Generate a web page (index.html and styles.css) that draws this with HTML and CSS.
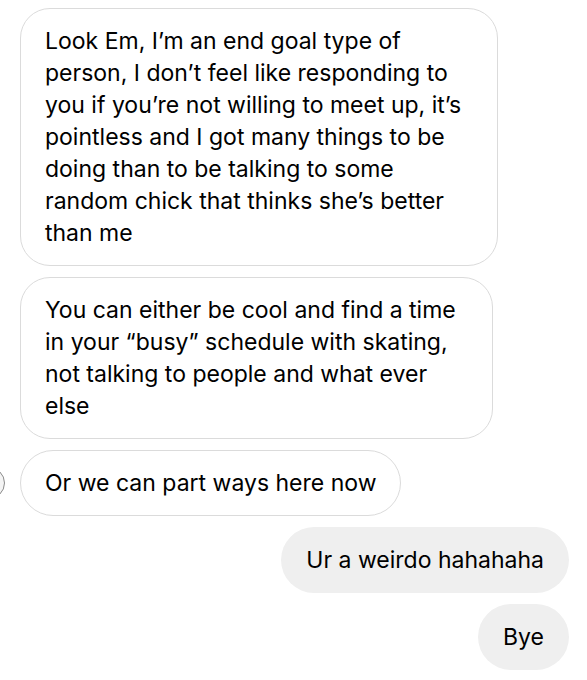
FILE: index.html
```html
<!DOCTYPE html>
<html lang="en">
<head>
    <meta charset="UTF-8">
    <meta name="viewport" content="width=device-width, initial-scale=1.0">
    <title>Messages</title>
    <link rel="stylesheet" href="styles.css">
</head>
<body>
    <div class="thread">
        <!-- Incoming messages -->
        <div class="bubble incoming">
            Look Em, I’m an end goal type of<br>
            person, I don’t feel like responding to<br>
            you if you’re not willing to meet up, it’s<br>
            pointless and I got many things to be<br>
            doing than to be talking to some<br>
            random chick that thinks she’s better<br>
            than me
        </div>
        <div class="bubble incoming">
            You can either be cool and find a time<br>
            in your “busy” schedule with skating,<br>
            not talking to people and what ever<br>
            else
        </div>
        <div class="row">
            <div class="avatar"></div>
            <div class="bubble incoming">Or we can part ways here now</div>
        </div>

        <!-- Outgoing messages -->
        <div class="bubble outgoing">Ur a weirdo hahahaha</div>
        <div class="bubble outgoing">Bye</div>
    </div>
</body>
</html>
```

FILE: styles.css
```css
body {
    margin: 0;
    background-color: #ffffff;
    font-family: Inter, "Noto Sans", sans-serif;
    color: #000000;
    overflow: hidden;
}

.thread {
    display: flex;
    flex-direction: column;
    gap: 11px;
    padding: 8px 18px 0 20px;
}

.bubble {
    font-size: 23px;
    line-height: 32px;
    padding: 16px 36px 16px 24px;
    border-radius: 30px;
    white-space: nowrap;
    width: fit-content;
}

.incoming {
    align-self: flex-start;
    background-color: #ffffff;
    border: 1px solid #dbdbdb;
}

.outgoing {
    align-self: flex-end;
    background-color: #efefef;
    padding: 17px 25px 17px 25px;
    border-radius: 34px;
}

.row {
    display: flex;
    align-items: center;
}

.row .bubble {
    border-radius: 34px;
    padding-right: 24px;
}

/* Avatar, mostly cut off by the left edge */
.avatar {
    width: 30px;
    height: 30px;
    margin-left: -47px;
    margin-right: 15px;
    border-radius: 50%;
    border: 1px solid #8a8a8a;
    background-color: #f4f4f4;
    flex-shrink: 0;
}
```
